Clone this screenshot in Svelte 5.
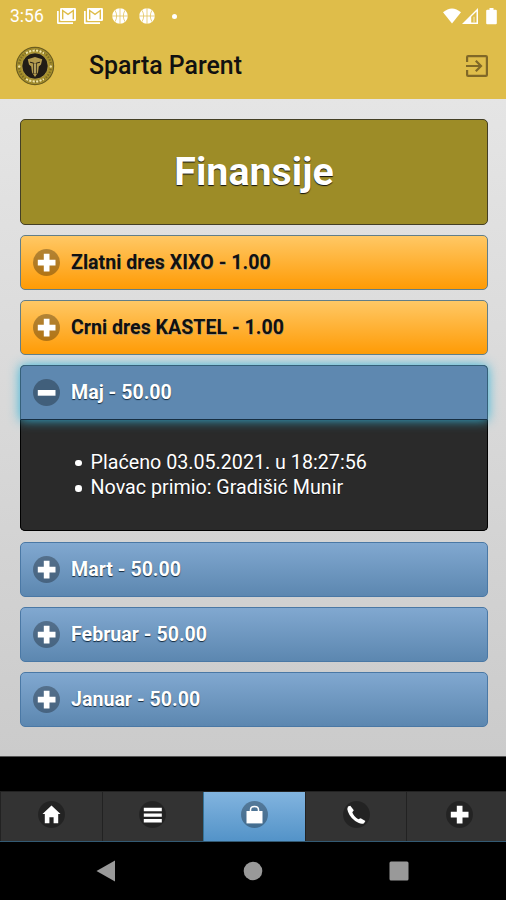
<script>
  let stavke = $state([
    { naziv: "Zlatni dres XIXO - 1.00", tip: "dres", otvoreno: false, detalji: [] },
    { naziv: "Crni dres KASTEL - 1.00", tip: "dres", otvoreno: false, detalji: [] },
    {
      naziv: "Maj - 50.00",
      tip: "clanarina",
      otvoreno: true,
      detalji: ["Plaćeno 03.05.2021. u 18:27:56", "Novac primio: Gradišić Munir"]
    },
    { naziv: "Mart - 50.00", tip: "clanarina", otvoreno: false, detalji: [] },
    { naziv: "Februar - 50.00", tip: "clanarina", otvoreno: false, detalji: [] },
    { naziv: "Januar - 50.00", tip: "clanarina", otvoreno: false, detalji: [] }
  ]);

  const tabovi = ["home", "bars", "shop", "phone", "plus"];
  let aktivni = $state("shop");
</script>

{#snippet gmail()}
  <svg class="gmail" width="19" height="16" viewBox="0 0 19 16">
    <path d="M0 3h1.7v11.2H16V16H1.2Q0 16 0 14.8z" fill="#fff" />
    <rect x="3" width="16" height="13" rx="1.3" fill="#fff" />
    <path d="M5.7 11.2V2.5L11 6.3l5.3-3.8v8.7" fill="none" stroke="#dfbd4a" stroke-width="1.4" />
  </svg>
{/snippet}

{#snippet lopta()}
  <svg class="lopta" width="16" height="16" viewBox="0 0 16 16">
    <circle cx="8" cy="8" r="7.8" fill="#fff" />
    <path d="M8 0v16M0 8h16M3 2.3q3.4 5.7 0 11.4M13 2.3q-3.4 5.7 0 11.4" fill="none" stroke="#dfbd4a" stroke-width=".7" />
  </svg>
{/snippet}

<main class="app">
  <div class="status">
    <span class="sat">3:56</span>
    {@render gmail()}
    {@render gmail()}
    {@render lopta()}
    {@render lopta()}
    <span class="tacka"></span>
    <svg class="signal" width="55" height="17" viewBox="0 0 55 17">
      <path d="M0 4.3Q9-3.5 18 4.3L9 15.5z" fill="#fff" />
      <path d="M19 16 35 0v16z" fill="#fff" />
      <path d="M28.2 8.8 33.5 3.5v11h-5.3z" fill="#dfbd4a" />
      <path d="M30 8.8h2v5.4h-2z" fill="#fff" opacity=".35" />
      <path d="M46.5 0h4v1.8h2.3q1 0 1 1v12.4q0 1-1 1h-8.6q-1 0-1-1V2.8q0-1 1-1h2.3z" fill="#fff" />
    </svg>
  </div>

  <header class="header">
    <svg class="logo" width="40" height="40" viewBox="0 0 40 40">
      <circle cx="20" cy="20" r="18.6" fill="#a8912c" stroke="#6b5d20" stroke-width="1.2" />
      <circle cx="20" cy="20" r="16" fill="none" stroke="#7d6b24" stroke-width="2.2" stroke-dasharray="1.5 1.4" />
      <path d="M11 7.3Q20 1.8 29 7.3M11 33Q20 38 29 33" fill="none" stroke="#f0e5a6" stroke-width="2" stroke-dasharray="2.2 1.3" />
      <circle cx="20" cy="20" r="13.2" fill="#211c16" stroke="#c4ab48" stroke-width=".8" />
      <path d="M12.8 13.2 20 11 27.2 13.2 26 18.5 23.8 20.5 23 26.5 20 31 17 26.5 16.2 20.5 14 18.5z" fill="#b39a4e" />
      <path d="M15 16.2 18.8 17.2V28M25 16.2 21.2 17.2V28" fill="none" stroke="#211c16" stroke-width="1" />
      <path d="M20 18v9" stroke="#d9c27a" stroke-width="1.1" />
      <circle cx="4.2" cy="20.5" r="1.2" fill="#eee0a0" /><circle cx="35.8" cy="20.5" r="1.2" fill="#eee0a0" />
    </svg>
    <h1>Sparta Parent</h1>
    <button class="izlaz" aria-label="Odjava">
      <svg width="24" height="24" viewBox="0 0 24 24" fill="none" stroke="#806827" stroke-width="2.2">
        <path d="M2.1 8V3.1q0-1 1-1h17.8q1 0 1 1v17.8q0 1-1 1H3.1q-1 0-1-1V16M1 12h14.5M10.8 6.8 16 12l-5.2 5.2" />
      </svg>
    </button>
  </header>

  <section class="sadrzaj">
    <div class="naslov"><h2>Finansije</h2></div>

    {#each stavke as s}
      <article class="stavka {s.tip}" class:otvoreno={s.otvoreno}>
        <button class="glava" onclick={() => (s.otvoreno = !s.otvoreno)}>
          <svg class="znak" width="27" height="27" viewBox="0 0 27 27">
            <circle cx="13.5" cy="13.5" r="13.5" fill="#000" fill-opacity=".3" />
            {#if s.otvoreno}
              <path d="M4.8 11h17.7v5.7H4.8z" fill="#fff" />
            {:else}
              <path d="M10.8 4.8h5.7v6h6v5.7h-6v6h-5.7v-6h-6v-5.7h6z" fill="#fff" />
            {/if}
          </svg>
          <span>{s.naziv}</span>
        </button>
        {#if s.otvoreno}
          <ul class="detalji">
            {#each s.detalji as d}
              <li>{d}</li>
            {/each}
          </ul>
        {/if}
      </article>
    {/each}
  </section>

  <nav class="tabovi">
    {#each tabovi as t}
      <button class="tab" class:aktivan={aktivni === t} aria-label={t} onclick={() => (aktivni = t)}>
        <svg width="27" height="27" viewBox="0 0 27 27">
          <circle cx="13.5" cy="13.5" r="13.5" fill="#000" fill-opacity=".3" />
          {#if t === "home"}
            <path d="M13.5 4.6 22.5 13h-2.3v9.3h-4.6v-6h-4.2v6H6.8V13H4.5z" fill="#fff" />
          {:else if t === "bars"}
            <path d="M4.8 6.8h18v3.4h-18zM4.8 12.4h18v3.4h-18zM4.8 18h18v3.4h-18z" fill="#fff" />
          {:else if t === "shop"}
            <path d="M5.5 10h16v12.4h-16z" fill="#fff" />
            <path d="M9.5 12V8.7q0-3.2 4-3.2t4 3.2V12" fill="none" stroke="#fff" stroke-width="1.5" />
          {:else if t === "phone"}
            <path d="M5 5.5 7.3 4.8 10.8 9.3 9.3 11.3Q10.5 15.5 15.3 18.2L17.7 17.2 22.4 20 21 22.2Q19 23.4 15.3 21.8 7.5 18 5 10.8 3.7 7.3 5 5.5z" fill="#fff" />
          {:else}
            <path d="M10.8 4.8h5.7v6h6v5.7h-6v6h-5.7v-6h-6v-5.7h6z" fill="#fff" />
          {/if}
        </svg>
      </button>
    {/each}
  </nav>

  <footer class="sistem">
    <svg width="20" height="22" viewBox="0 0 20 22"><path d="M.5 11 19 .5v21z" fill="#999" /></svg>
    <svg width="20" height="20" viewBox="0 0 20 20"><circle cx="10" cy="10" r="9.3" fill="#999" /></svg>
    <svg width="20" height="20" viewBox="0 0 20 20"><rect x=".5" y=".5" width="19" height="19" rx="1.5" fill="#999" /></svg>
  </footer>
</main>

<style>
  :global(body) { margin:0; background:#000; }
  .app { width:506px; height:900px; display:flex; flex-direction:column; overflow:hidden; background:#000; font-family:Roboto, "Noto Sans", sans-serif; }
  button { border:0; padding:0; background:none; font:inherit; cursor:pointer; }
  svg { display:block; flex:none; }

  .status { height:32px; box-sizing:border-box; padding:0 8px 0 10px; display:flex; align-items:center; background:#dfbd4a; }
  .sat { width:47px; font-size:17.5px; color:#fff; }
  .gmail { margin-right:8px; }
  .gmail + .lopta { margin-left:1px; }
  .lopta { margin-right:11px; }
  .tacka { width:5px; height:5px; border-radius:50%; background:#fff; margin-left:6px; }
  .signal { margin-left:auto; }

  .header { height:67px; box-sizing:border-box; padding:0 17px 0 15px; display:flex; align-items:center; background:#dfbd4a; }
  .header h1 { margin:0 0 0 34px; font-size:24.9px; font-weight:500; color:#111; }
  .izlaz { margin-left:auto; }

  .sadrzaj { height:658px; box-sizing:border-box; padding:20px 18px 0 20px; display:flex; flex-direction:column; gap:10px; background:linear-gradient(#e5e5e5, #cbcbcb); border-bottom:1px solid #555; }
  .naslov { height:106px; box-sizing:border-box; padding-bottom:2px; display:flex; align-items:center; justify-content:center; border:1px solid #443f25; border-radius:5px; background:#9d8c27; }
  .naslov h2 { margin:0; font-size:39.4px; font-weight:700; color:#fff; text-shadow:0 1px 1px #111; }

  .stavka { border-radius:5px; }
  .glava { width:100%; height:55px; box-sizing:border-box; padding:0 11.5px; display:flex; align-items:center; gap:11.5px; border:1px solid #4a78a5; border-radius:5px; font-size:19.6px; font-weight:700; text-align:left; color:#fff; text-shadow:0 1px 1px #12283d; background:linear-gradient(#81a8d0, #5c87b0); }
  .dres .glava { border-color:#627e88; color:#111; text-shadow:0 1px 0 #b09a70; background:linear-gradient(#ffc865, #ff9b05); }

  .otvoreno { margin-bottom:.6px; background:#2a2a2a; }
  .otvoreno .glava { position:relative; border-color:#35607a; border-bottom-color:#172f43; border-radius:5px 5px 0 0; background:#5e88b0; box-shadow:0 0 12px #35b5da; }
  .detalji { height:111px; box-sizing:border-box; margin:0; padding:30px 15px 0 54px; list-style:none; border:1px solid #000; border-top:0; border-radius:0 0 5px 5px; background:#2a2a2a; font-size:19.7px; line-height:25.3px; color:#fff; text-shadow:0 1px 0 #111; }
  .detalji li { display:flex; align-items:center; gap:9px; }
  .detalji li::before { content:""; width:6.5px; height:6.5px; border-radius:50%; background:#fff; margin-top:1px; }

  .tabovi { height:51px; margin-top:34px; display:flex; box-sizing:border-box; border-bottom:1px solid #335a73; border-top:1px solid #222; }
  .tab { flex:none; width:101.6px; box-sizing:border-box; display:flex; align-items:center; justify-content:center; padding-bottom:4px; border-left:1px solid #222; background:#333; }
  .tab:last-child { padding-left:3px; }
  .tab.aktivan { background:linear-gradient(#82b4df, #5393c8); border-left-color:#347398; }

  .sistem { flex:1; padding:0 97px 0 96px; display:flex; align-items:center; justify-content:space-between; }
</style>
